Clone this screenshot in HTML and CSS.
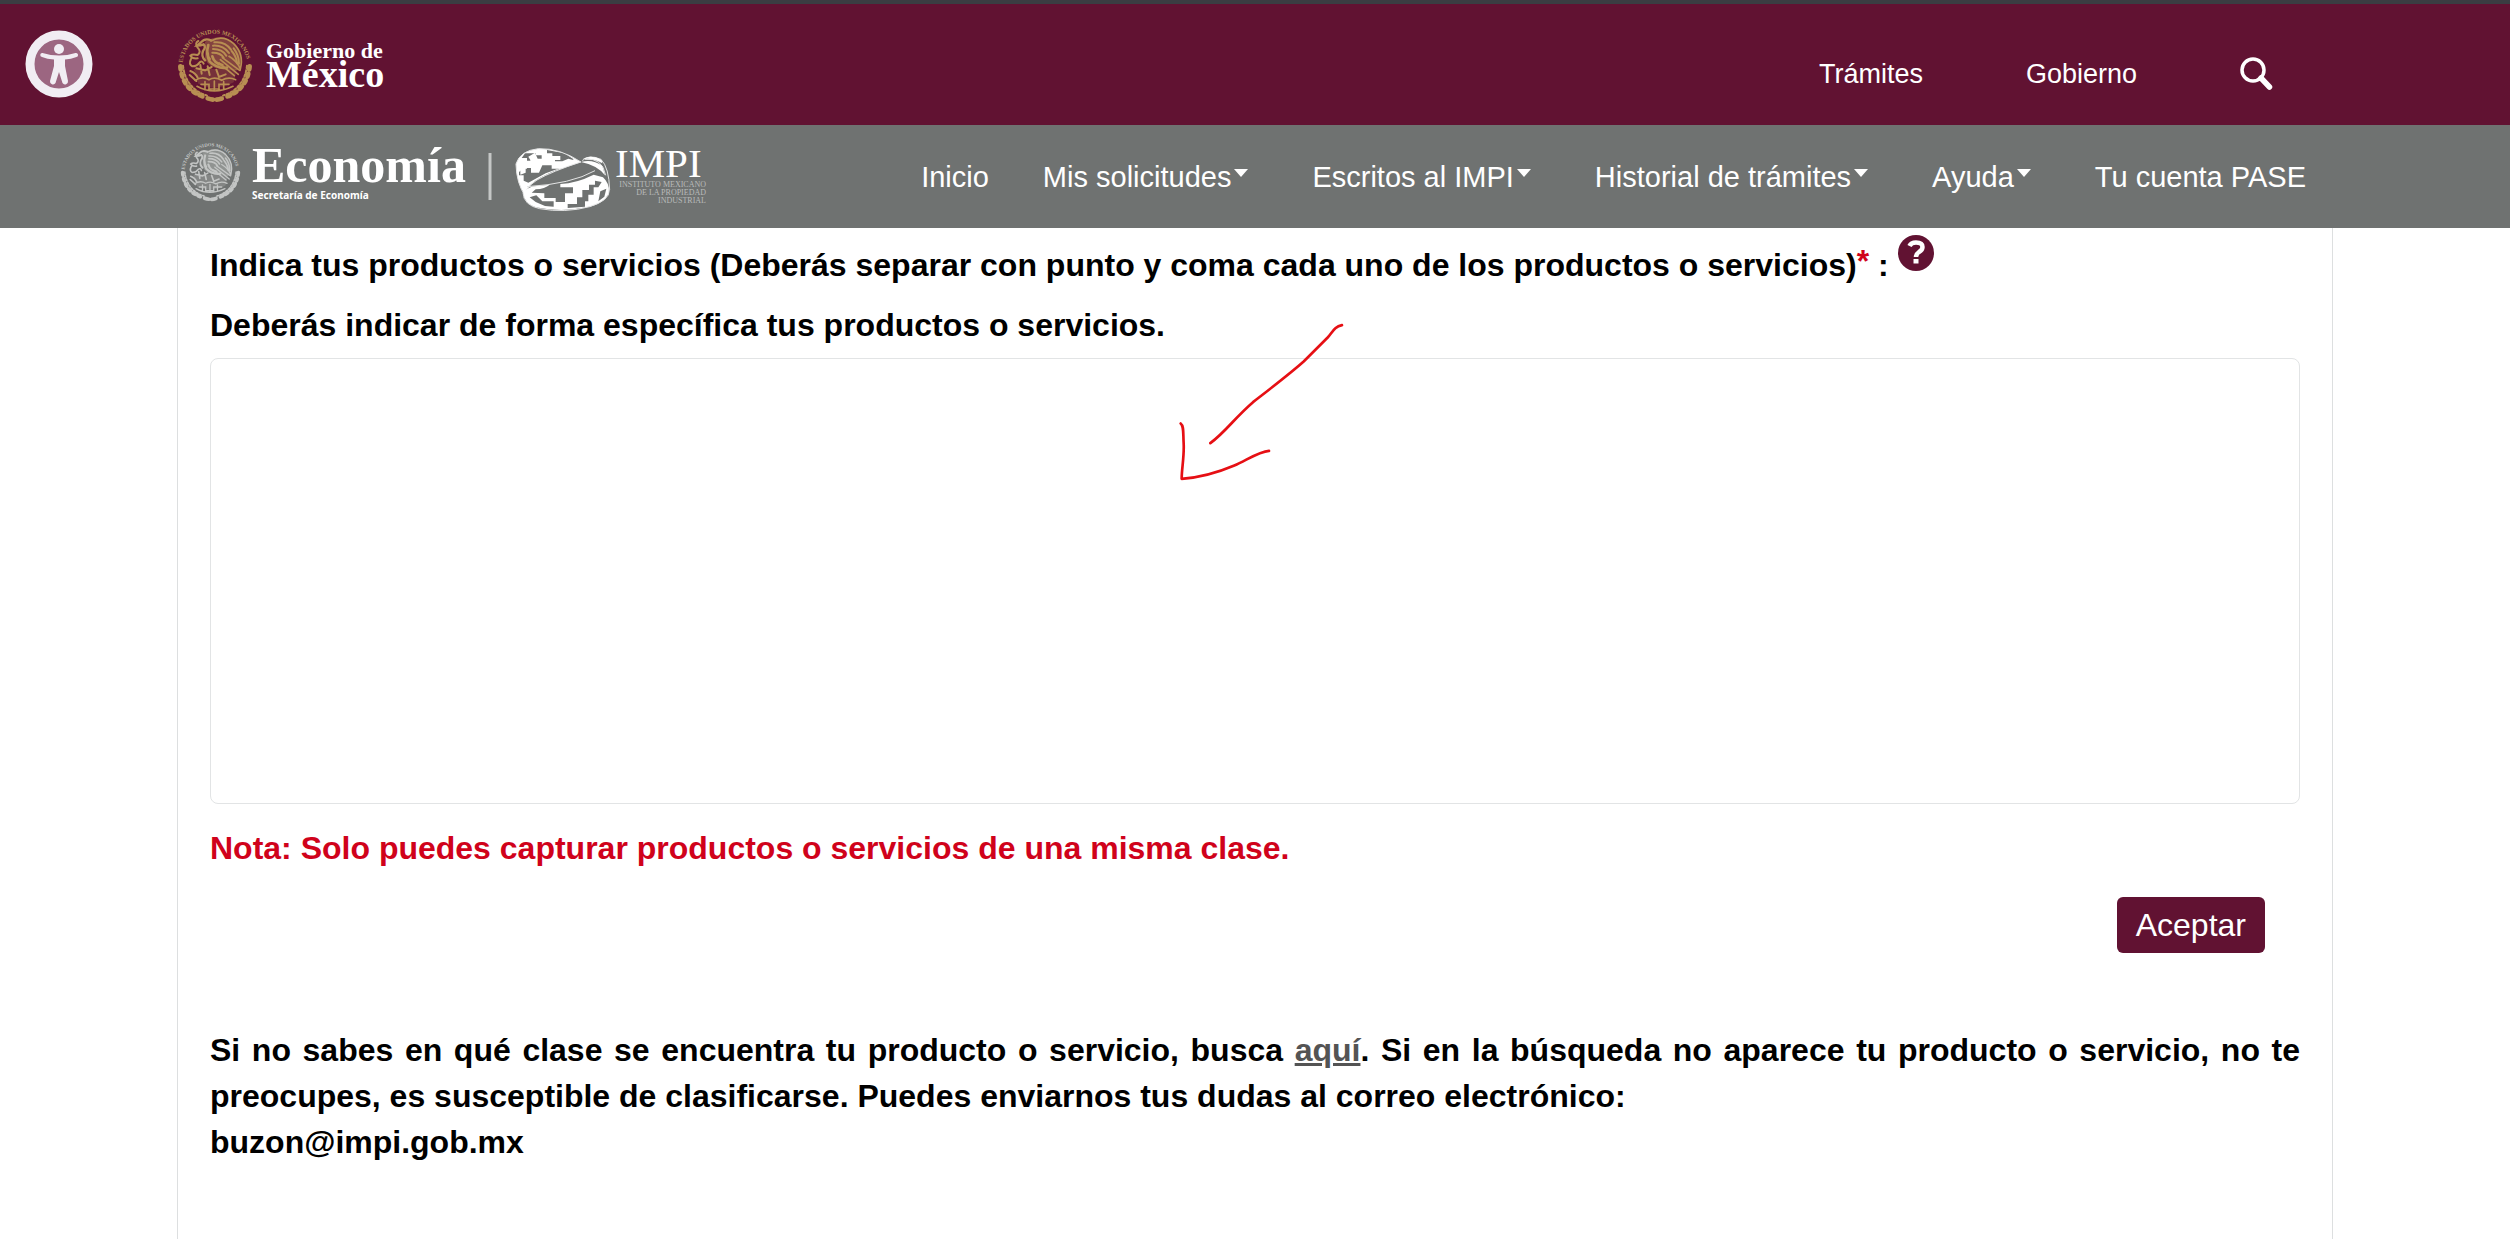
FILE: index.html
```html
<!DOCTYPE html>
<html lang="es">
<head>
<meta charset="utf-8">
<meta name="viewport" content="width=device-width, initial-scale=1">
<title>Productos o servicios - IMPI</title>
<link rel="stylesheet" href="styles.css">
</head>
<body>
<svg class="defs" aria-hidden="true">
  <symbol id="seal" viewBox="20 20 228 228" overflow="visible">
    <path id="seal-arc" d="M37 127A97 97 0 0 1 230 127" fill="none"/>
    <text class="seal-text"><textPath href="#seal-arc">ESTADOS UNIDOS MEXICANOS</textPath></text>
    <path d="M104 64Q158 34 194 72Q222 104 208 150L150 146Q116 142 104 116Z" fill="currentColor" opacity=".4"/>
    <path d="M70 146H200L190 186Q134 216 84 190Z" fill="currentColor" opacity=".25"/>
    <g fill="none" stroke="currentColor" stroke-linecap="round">
      <path d="M30 138Q36 212 108 232M238 138Q230 212 160 232" stroke-width="14" stroke-dasharray="9 13"/>
      <path d="M38 136Q46 205 110 226M230 136Q222 205 158 226" stroke-width="6" stroke-dasharray="7 6"/>
      <path d="M112 234Q134 242 156 234" stroke-width="14" stroke-dasharray="16 11"/>
      <path d="M122 62Q158 42 190 70Q222 102 210 146Q200 122 176 108" stroke-width="5"/>
      <path d="M132 66Q164 62 182 88M128 76Q158 74 176 98M128 86Q156 86 168 106M126 97Q150 96 160 112M190 84Q206 104 206 130M184 92Q198 108 200 128" stroke-width="6"/>
      <path d="M122 60Q104 52 92 66L80 76Q92 76 100 72Q108 80 98 92Q92 108 104 120" stroke-width="7"/>
      <path d="M114 74Q106 100 118 124Q140 146 170 142M126 108Q132 130 156 134M112 98Q112 112 118 116" stroke-width="8"/>
      <path d="M84 62Q72 68 82 82Q94 94 82 104Q66 100 60 106Q66 116 82 114M62 116Q54 132 66 138Q80 138 88 126Q96 120 100 130" stroke-width="6"/>
      <path d="M150 118L204 162M156 112L208 150M146 128L192 166" stroke-width="5"/>
      <path d="M78 144L104 150L124 140M90 134L94 160M112 138L118 164M138 148L146 170L166 162M60 152Q76 158 82 172M58 164L78 182" stroke-width="6"/>
      <path d="M74 180Q96 166 116 178Q134 168 154 180Q174 168 196 178M92 192H116V206H146V192H176M104 184V208M132 182V210M160 184V208M80 198Q130 226 188 198" stroke-width="5"/>
    </g>
  </symbol>
</svg>

<header>
  <div class="gov">
    <div class="wrap gov-row">
      <a href="#" aria-label="Gobierno de México">
        <svg class="gov-logo" viewBox="0 0 210 76" role="img" aria-label="Gobierno de México">
          <use class="seal-gold" href="#seal" width="76" height="76"/>
          <text class="gov-small" x="89" y="31">Gobierno de</text>
          <text class="gov-big" x="89" y="60">México</text>
        </svg>
      </a>
      <nav class="gov-nav" aria-label="Gobierno">
        <a href="#">Trámites</a>
        <a href="#">Gobierno</a>
        <a href="#" aria-label="Buscar">
          <svg class="search" viewBox="0 0 33 34" aria-hidden="true">
            <circle cx="13" cy="13" r="11" fill="none" stroke="currentColor" stroke-width="3.500"/>
            <path d="M21 21L29.500 30" stroke="currentColor" stroke-width="5.500" stroke-linecap="round"/>
          </svg>
        </a>
      </nav>
    </div>
  </div>
  <div class="site">
    <div class="wrap site-row">
      <a href="#" aria-label="Economía e IMPI">
        <svg class="site-logo" viewBox="0 0 532 80" role="img" aria-label="Economía, IMPI">
          <use class="seal-grey" href="#seal" x="3" y="4" width="61" height="61"/>
          <text class="eco-big" x="75" y="45">Economía</text>
          <text class="eco-small" x="75" y="62">Secretaría de Economía</text>
          <path d="M313 16V63" stroke="#c5c7c6" stroke-width="3"/>
          <g transform="translate(328 3) scale(.33333)">
            <path fill="#fff" d="M33 72Q45 32 100 26Q165 24 228 66Q150 88 108 112Q72 132 58 162Q34 128 33 72Z"/>
            <path fill="#6f7271" d="M60 40H92V46H110V58H98V66H122V72H150V60H166V48H142V40H126V30L178 40L206 58L172 82L122 100L70 128L56 122V106H42V96L54 86H66V78H88V62H66V54H50Z"/>
            <path fill="#fff" d="M70 50L90 38L98 56H122L130 44L150 50L150 64H172L190 56L228 66L170 86H140V76H112L102 98H78V84H62V98L46 104V86L60 70H76V60Z"/>
            <path fill="none" stroke="#e4e5e5" stroke-width="3" d="M33 72Q45 32 100 26Q165 24 228 66Q140 94 96 120Q56 146 58 174M33 72Q34 130 62 170M66 140Q200 132 270 92M232 62Q250 42 288 58Q312 82 314 150M240 58Q292 52 302 106"/>
            <path fill="#fff" d="M228 66Q262 56 292 78L300 106Q278 76 228 66ZM232 58Q258 42 290 60L292 70Q260 52 232 58Z"/>
            <path fill="#fff" d="M54 158Q72 136 100 138L134 134Q120 146 92 148L80 158L118 160V174H152V186H180V160H204V142H166V132Q214 130 266 104L294 112Q314 130 312 158Q298 192 244 202Q170 218 92 202Q58 190 54 158Z"/>
            <path fill="#6f7271" d="M94 166L112 184H146V200L120 198L92 186L74 172ZM188 192H216V172H232V150H252V134H270V122L290 126L280 142H266V164H250V184H240V200L188 204ZM286 154L304 146L298 170L280 184Z"/>
            <path fill="none" stroke="#e4e5e5" stroke-width="3" d="M54 158Q56 196 104 206Q180 220 254 200Q314 182 313 150"/>
          </g>
          <text class="impi-big" x="438" y="40">IMPI</text>
          <g class="impi-small">
            <text x="529" y="50">INSTITUTO MEXICANO</text>
            <text x="529" y="58">DE LA PROPIEDAD</text>
            <text x="529" y="66">INDUSTRIAL</text>
          </g>
        </svg>
      </a>
      <nav class="site-nav" aria-label="Principal">
        <a href="#">Inicio</a>
        <button type="button" class="menu">Mis solicitudes<i class="caret"></i></button>
        <button type="button" class="menu">Escritos al IMPI<i class="caret"></i></button>
        <button type="button" class="menu">Historial de trámites<i class="caret"></i></button>
        <button type="button" class="menu">Ayuda<i class="caret"></i></button>
        <a href="#">Tu cuenta PASE</a>
      </nav>
    </div>
  </div>
</header>

<button type="button" class="access" aria-label="Accesibilidad">
  <svg viewBox="0 0 68 68" aria-hidden="true">
    <circle cx="34" cy="34" r="29" fill="#9c6681" stroke="#f1edf3" stroke-width="9"/>
    <g fill="#f1edf3">
      <circle cx="34" cy="19" r="5"/>
      <path d="M17.500 23Q34 28 50.500 23A2 2 0 0 1 51.500 27Q46 29 40 29.500V36L43 51A3 3 0 0 1 37.500 53L34 42L30.500 53A3 3 0 0 1 25 51L29 36V29.500Q22 29 17 27A2 2 0 0 1 17.500 23Z"/>
    </g>
  </svg>
</button>

<main class="wrap panel">
  <form>
    <label class="label" for="productos">Indica tus productos o servicios (Deberás separar con punto y coma cada uno de los productos o servicios)<span class="required">*</span> :
      <svg class="help" viewBox="0 0 36 36" role="img" aria-label="Ayuda">
        <circle cx="18" cy="18" r="18" fill="#611232"/>
        <path d="M11.500 11Q13 7.500 18 7.500Q24.500 7.500 24.500 12Q24.500 15 21 17Q18 19 18 22" fill="none" stroke="#fff" stroke-width="4.500"/>
        <path d="M15.500 24H20.500V28.500H15.500Z" fill="#fff"/>
      </svg>
    </label>
    <p class="hint">Deberás indicar de forma específica tus productos o servicios.</p>
    <div class="field">
      <textarea id="productos"></textarea>
      <svg class="arrow" viewBox="90 60 540 500" aria-hidden="true">
        <path d="M603 75C580 80 575 95 560 112L488 184C450 218 390 264 336 306C280 354 255 394 208 429M119 370C129 378 126 395 128 430C130 470 122 505 122 536C180 532 240 513 280 496C320 478 355 454 384 452"/>
      </svg>
    </div>
    <p class="note">Nota: Solo puedes capturar productos o servicios de una misma clase.</p>
    <div class="actions"><button type="submit" class="accept">Aceptar</button></div>
  </form>
  <p class="info">Si no sabes en qué clase se encuentra tu producto o servicio, busca <a href="#">aquí</a>. Si en la búsqueda no aparece tu producto o servicio, no te preocupes, es susceptible de clasificarse. Puedes enviarnos tus dudas al correo electrónico:<br>buzon@impi.gob.mx</p>
</main>
</body>
</html>
```
FILE: styles.css
```css
* {
  box-sizing: border-box;
}

body {
  margin: 0;
  min-height: 100vh;
  display: flex;
  flex-direction: column;
  background: #fff;
  color: #000;
  font: 32px/46px "Liberation Sans", Arial, sans-serif;
}

p {
  margin: 0;
}

.defs {
  position: absolute;
  width: 0;
  height: 0;
}

.wrap {
  width: 100%;
  max-width: 2156px;
  margin: 0 auto;
}

/* Government bar */
.gov {
  background: #611232;
  border-top: 4px solid #3a3d42;
}

.gov-row,
.site-row {
  display: flex;
  align-items: center;
  justify-content: space-between;
  color: #fff;
}

.gov-row {
  min-height: 121px;
  padding-right: 60px;
}

.gov-row a,
.site-row a {
  color: inherit;
  text-decoration: none;
}

.gov-logo,
.site-logo,
.search {
  display: block;
}

.gov-logo {
  width: 210px;
  height: 76px;
}

.gov-nav {
  display: flex;
  align-items: center;
  gap: 103px;
  padding-top: 18px;
  font-size: 27px;
}

.search {
  width: 33px;
  height: 34px;
}

.seal-text {
  fill: currentColor;
  font: bold 18px "Liberation Serif", serif;
}

.seal-gold {
  color: #b88e52;
}

.seal-grey {
  color: #c3c5c4;
}

.gov-logo text,
.site-logo > text {
  fill: #fff;
}

.gov-small {
  font: bold 22px "Liberation Serif", serif;
}

.gov-big {
  font: bold 38px "Liberation Serif", serif;
}

/* Site bar */
.site {
  background: #6f7271;
}

.site-row {
  min-height: 103px;
  padding-right: 27px;
}

.site-logo {
  width: 532px;
  height: 80px;
}

.eco-big {
  font: bold 50px "Liberation Serif", serif;
}

.eco-small {
  font: bold 10px "Noto Sans", sans-serif;
}

.impi-big {
  font: 41px "Liberation Serif", serif;
}

.impi-small {
  fill: #b9bbba;
  font: 8px "Liberation Serif", serif;
  text-anchor: end;
}

.site-nav {
  display: flex;
  align-items: center;
  gap: 54px;
  font-size: 29px;
}

.menu {
  display: flex;
  align-items: center;
  gap: 3px;
  padding: 0 10px 0 0;
  border: 0;
  background: none;
  color: inherit;
  font: inherit;
}

.caret {
  margin-bottom: 8px;
  border: 7px solid transparent;
  border-top: 8px solid #fff;
  border-bottom: 0;
}

.access {
  position: absolute;
  top: 30px;
  left: 25px;
  padding: 0;
  border: 0;
  background: none;
}

.access svg {
  display: block;
  width: 68px;
  height: 68px;
}

/* Form */
.panel {
  flex: 1;
  padding: 7px 32px 40px;
  border: 1px solid #dddfe0;
  border-width: 0 1px;
  font-weight: bold;
}

.label {
  display: block;
}

.required,
.note {
  color: #d0021b;
}

.required {
  vertical-align: 4px;
}

.help {
  width: 36px;
  height: 36px;
  vertical-align: 5px;
}

.hint {
  margin: 14px 0 10px;
}

.field {
  position: relative;
}

.field textarea {
  display: block;
  width: 100%;
  height: 446px;
  padding: 12px;
  border: 1px solid #e2e4e5;
  border-radius: 8px;
  background: #fff;
  font: inherit;
  resize: none;
}

.arrow {
  position: absolute;
  top: -38px;
  left: 46%;
  width: 180px;
  height: 167px;
  fill: none;
  stroke: #e60f14;
  stroke-width: 8;
  stroke-linecap: round;
  stroke-linejoin: round;
  pointer-events: none;
}

.note {
  margin: 21px 0 26px;
}

.actions {
  display: flex;
  justify-content: flex-end;
  padding-right: 35px;
}

.accept {
  padding: 5px 19px;
  border: 0;
  border-radius: 6px;
  background: #611232;
  color: #fff;
  font: inherit;
  font-weight: normal;
}

.info {
  margin-top: 74px;
  text-align: justify;
}

.info a {
  color: #545454;
  text-decoration: underline;
}
```
